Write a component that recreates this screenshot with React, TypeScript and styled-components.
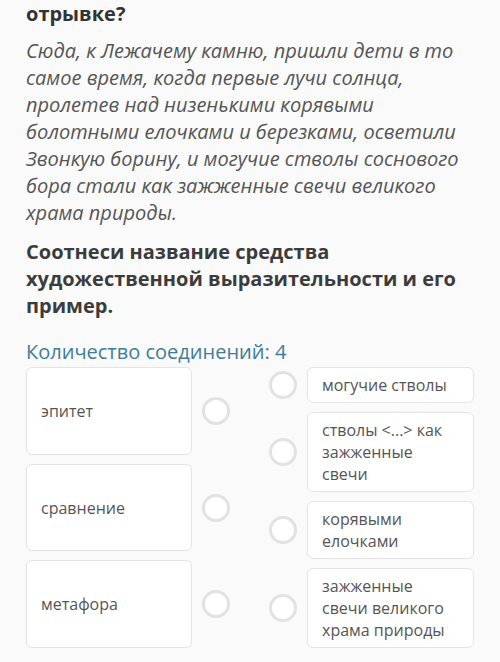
import React from "react";
import styled, { createGlobalStyle } from "styled-components";

const GlobalStyle = createGlobalStyle`
  html, body {
    margin: 0;
    padding: 0;
    background: #fafafa;
  }
  body {
    font-family: "Open Sans", "Noto Sans", "Liberation Sans", sans-serif;
  }
`;

const Page = styled.div`
  width: 500px;
  box-sizing: border-box;
  padding: 0 26px 14px;
`;

const QuestionTail = styled.h2`
  margin: 0;
  font-size: 20px;
  line-height: 27px;
  font-weight: 700;
  color: #333;
`;

const Excerpt = styled.p`
  margin: 10px 0 0;
  font-size: 20px;
  line-height: 27px;
  font-style: italic;
  color: #555;
`;

const Task = styled.h3`
  margin: 12px 0 0;
  font-size: 20px;
  line-height: 27px;
  font-weight: 700;
  color: #3c3c3c;
`;

const Counter = styled.div`
  margin-top: 19px;
  font-size: 20px;
  line-height: 27px;
  color: #3d7d99;
`;

const Board = styled.div`
  margin-top: 2px;
  display: flex;
  align-items: stretch;
`;

const Column = styled.div<{ $right?: boolean }>`
  display: flex;
  flex-direction: column;
  gap: 9px;
  margin-left: ${(p) => (p.$right ? "39px" : "0")};
`;

const Row = styled.div<{ $grow?: boolean }>`
  display: flex;
  align-items: center;
  gap: 10px;
  flex: ${(p) => (p.$grow ? 1 : "none")};
`;

const Card = styled.div`
  box-sizing: border-box;
  background: #fff;
  border: 1px solid #e4e4e4;
  border-radius: 6px;
  color: #555;
  font-size: 16px;
  line-height: 22px;
`;

const TermCard = styled(Card)`
  width: 166px;
  align-self: stretch;
  display: flex;
  align-items: center;
  padding: 0 14px;
`;

const ExampleCard = styled(Card)`
  width: 167px;
  padding: 6px 21px 6px 14px;
`;

const Dot = styled.div`
  box-sizing: border-box;
  width: 28px;
  height: 28px;
  flex: none;
  border-radius: 50%;
  border: 3px solid #e2e2e2;
  background: #fff;
`;

const terms = ["эпитет", "сравнение", "метафора"];
const examples = [
  "могучие стволы",
  "стволы <...> как зажженные свечи",
  "корявыми елочками",
  "зажженные свечи великого храма природы",
];

export default function App() {
  return (
    <Page>
      <GlobalStyle />
      <QuestionTail>отрывке?</QuestionTail>
      <Excerpt>
        Сюда, к Лежачему камню, пришли дети в то самое время, когда первые лучи
        солнца, пролетев над низенькими корявыми болотными елочками и
        березками, осветили Звонкую борину, и могучие стволы соснового бора
        стали как зажженные свечи великого храма природы.
      </Excerpt>
      <Task>
        Соотнеси название средства художественной выразительности и его
        пример.
      </Task>
      <Counter>Количество соединений: 4</Counter>
      <Board>
        <Column>
          {terms.map((t) => (
            <Row key={t} $grow>
              <TermCard>{t}</TermCard>
              <Dot />
            </Row>
          ))}
        </Column>
        <Column $right>
          {examples.map((e) => (
            <Row key={e}>
              <Dot />
              <ExampleCard>{e}</ExampleCard>
            </Row>
          ))}
        </Column>
      </Board>
    </Page>
  );
}
